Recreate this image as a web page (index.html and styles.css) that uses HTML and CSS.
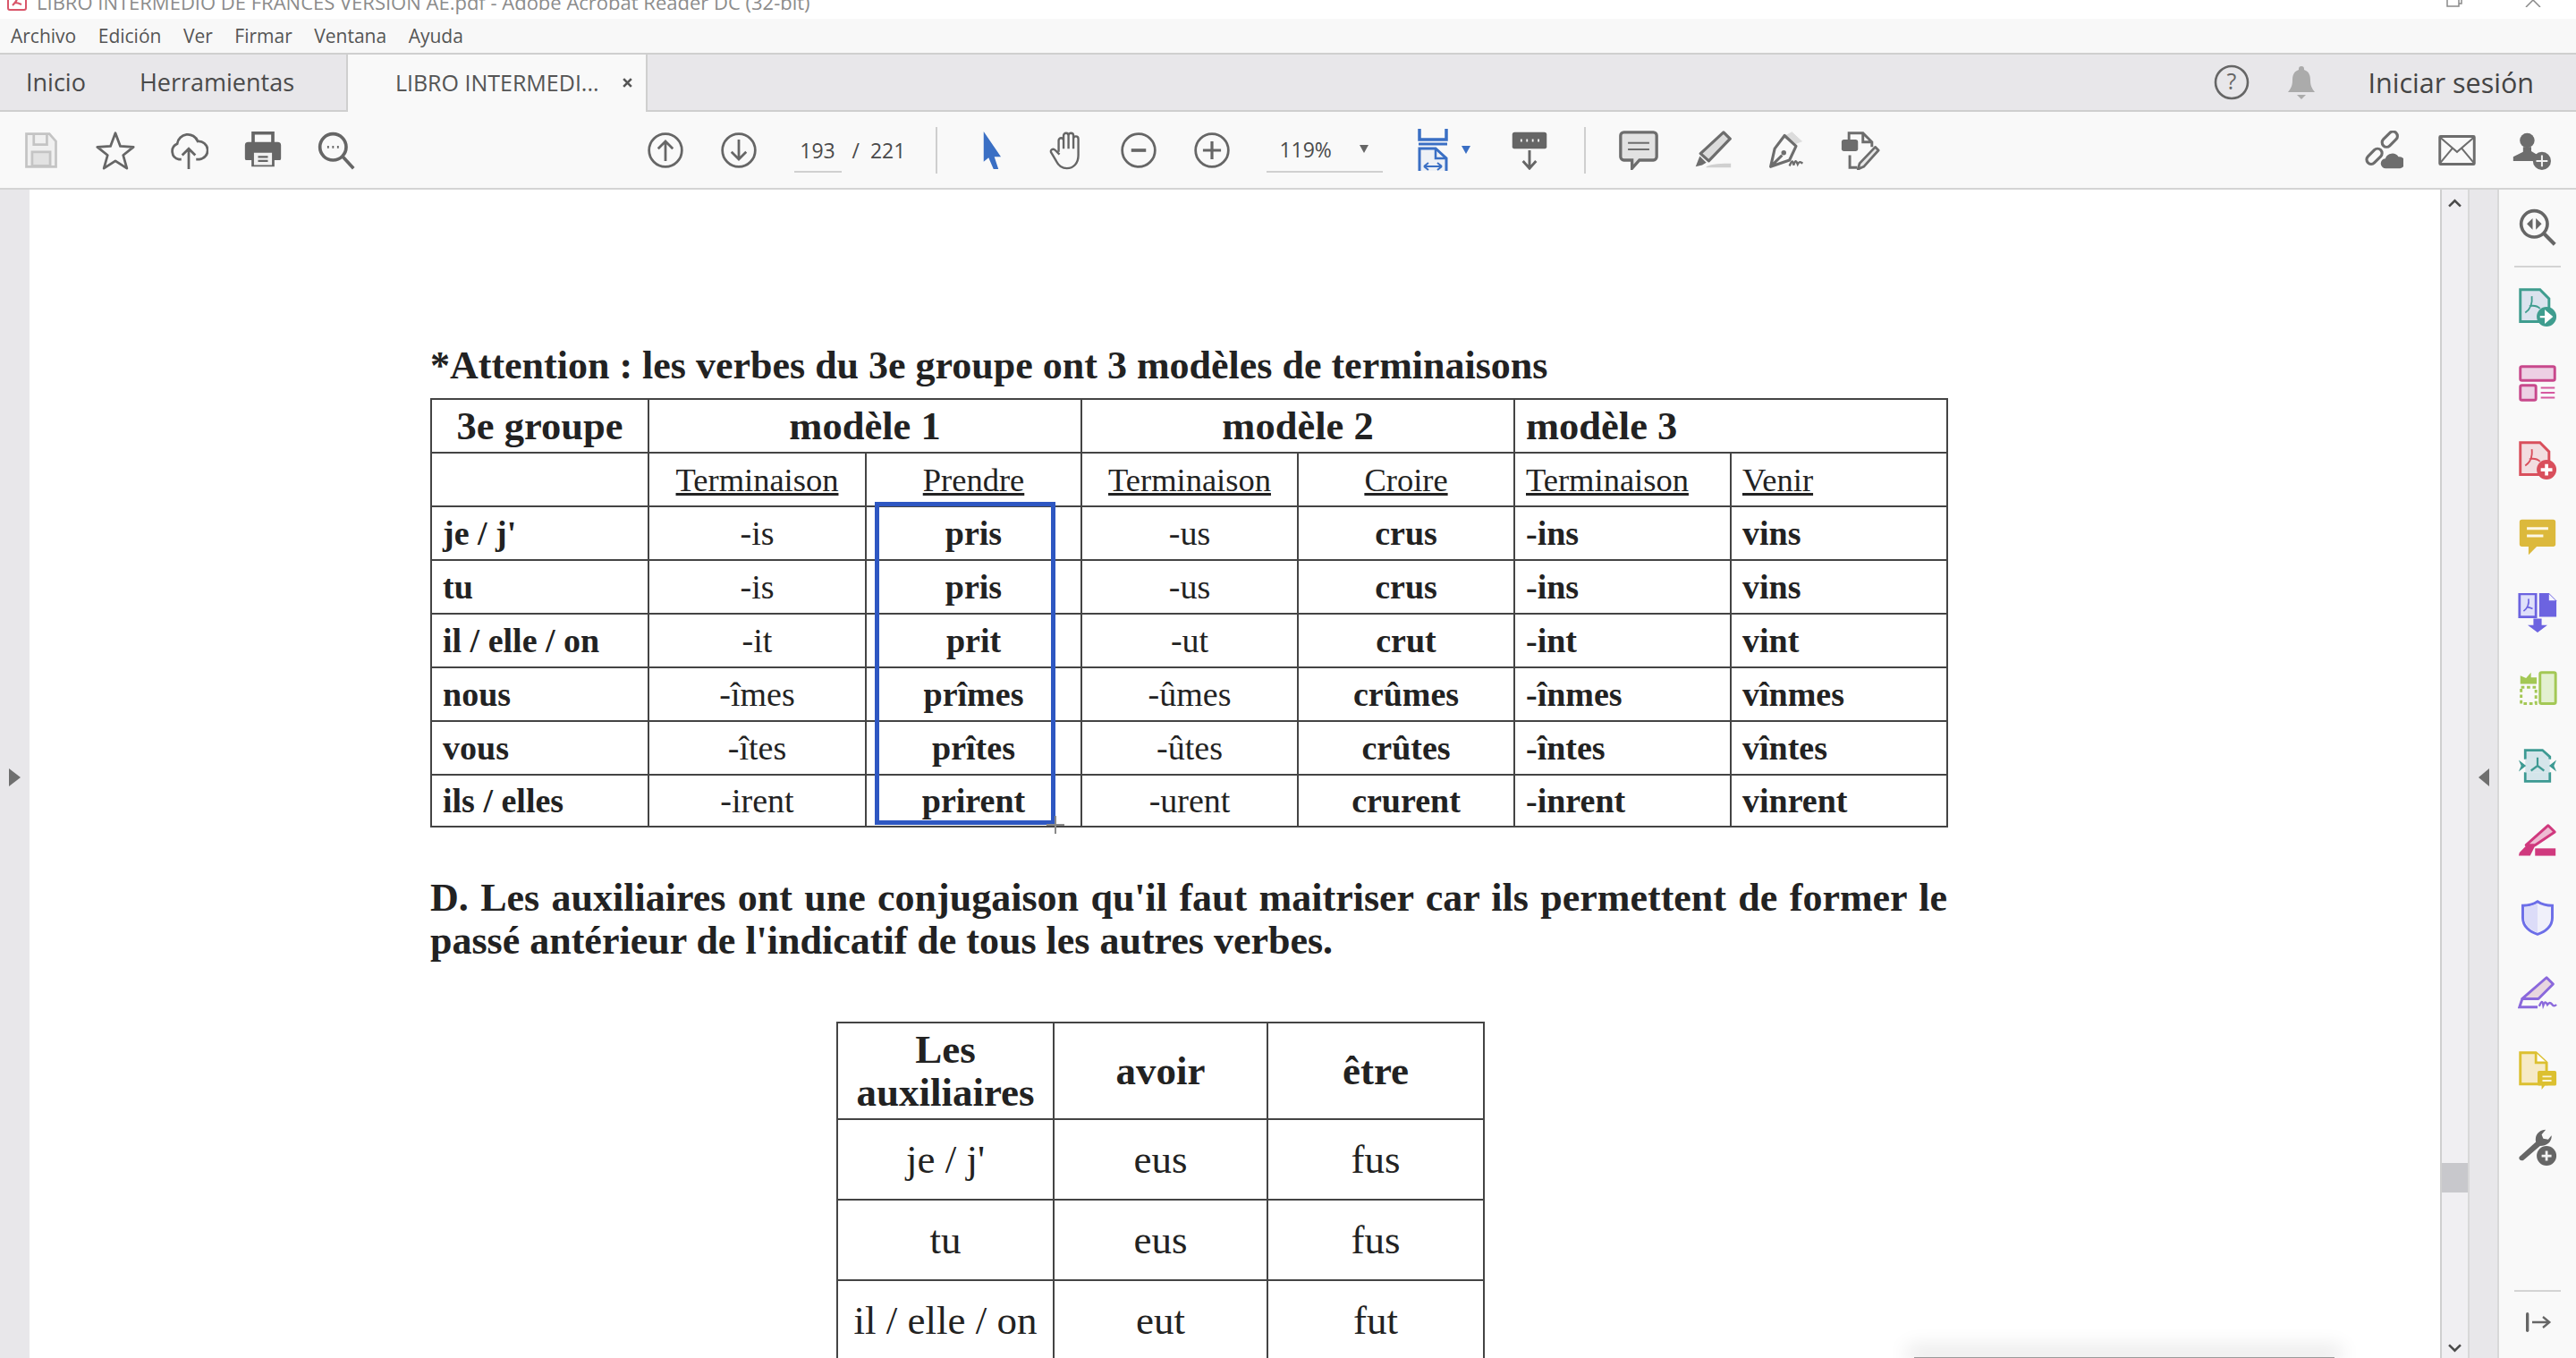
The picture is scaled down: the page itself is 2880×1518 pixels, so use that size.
FILE: index.html
```html
<!DOCTYPE html>
<html lang="es">
<head>
  <meta charset="UTF-8">
  <title>LIBRO INTERMEDIO DE FRANCES VERSION AE.pdf - Adobe Acrobat Reader DC (32-bit)</title>
  <link rel="stylesheet" href="styles.css">
</head>
<body>
  <div id="titlebar">
    <svg class="pdf-mark" viewBox="0 -10 22 22"><rect x="1" y="-10" width="20" height="21" rx="2" fill="#fff" stroke="#d9566a" stroke-width="2"/><path d="M6 6c3-3 6-6 5-10M9 3c3 0 5 1 7 2" fill="none" stroke="#d9566a" stroke-width="2"/></svg>
    <span class="window-title">LIBRO INTERMEDIO DE FRANCES VERSION AE.pdf - Adobe Acrobat Reader DC (32-bit)</span>
    <svg class="win-restore" viewBox="0 0 18 8"><path d="M1 -4v11h13v-11M5 -4h12v8h-3" fill="none" stroke="#8a8a8a" stroke-width="1.5"/></svg>
    <svg class="win-close" viewBox="0 0 18 8"><path d="M1 8L10 -1M17 8L8 -1" fill="none" stroke="#8a8a8a" stroke-width="1.5"/></svg>
  </div>

  <div id="menubar">
    <span>Archivo</span><span>Edición</span><span>Ver</span><span>Firmar</span><span>Ventana</span><span>Ayuda</span>
  </div>

  <div id="tabbar">
    <span class="tab">Inicio</span>
    <span class="tab tab-tools">Herramientas</span>
    <div class="tab-active">
      <span>LIBRO INTERMEDI...</span>
      <svg class="tab-close" viewBox="0 0 12 12"><path d="M2 2l8 8M10 2l-8 8" stroke="#555" stroke-width="2.4" fill="none"/></svg>
    </div>
    <div class="tab-right">
      <svg class="help" viewBox="0 0 40 40"><circle cx="20" cy="20" r="18" fill="none" stroke="#666" stroke-width="2.6"/><text x="20" y="28" text-anchor="middle" class="help-mark">?</text></svg>
      <svg class="bell" viewBox="0 0 32 38"><path d="M16 1a3 3 0 0 1 3 3v1c6 2 7 7 7 12 0 6 2 9 5 13H1c3-4 5-7 5-13 0-5 1-10 7-12V4a3 3 0 0 1 3-3z" fill="#ababab"/><path d="M11 33h10l-5 5z" fill="#ababab"/></svg>
      <span class="signin">Iniciar sesión</span>
    </div>
  </div>

  <div id="toolbar">
    <div class="tool"><svg class="ic" viewBox="0 0 48 48"><path d="M6 4h28l8 9v31H6z" fill="#f0f0f0" stroke="#c4c4c4" stroke-width="3"/><path d="M15 5v12h16V5" fill="none" stroke="#c4c4c4" stroke-width="3"/><rect x="13" y="26" width="22" height="17" fill="#e2e2e2" stroke="#c4c4c4" stroke-width="3"/></svg></div>
    <div class="tool"><svg class="ic" viewBox="0 0 48 48"><path d="M24 3l6 16 16 1-12.500 10 4.500 16-14-9-14 9 4.500-16L2 20l16-1z" fill="none" stroke="#666" stroke-width="3" stroke-linejoin="round"/></svg></div>
    <div class="tool"><svg class="ic" viewBox="0 0 48 48"><path d="M15 35h-3a10 10 0 0 1-2-19 13 13 0 0 1 25-3 11 11 0 0 1 2 22h-4" fill="none" stroke="#666" stroke-width="3"/><path d="M24 47V22M16 30l8-8 8 8" fill="none" stroke="#666" stroke-width="3"/></svg></div>
    <div class="tool"><svg class="ic" viewBox="0 0 48 48"><path d="M12 15V3h24v12" fill="none" stroke="#666" stroke-width="4"/><path d="M6 14h36a4 4 0 0 1 4 4v16a2 2 0 0 1-2 2h-6v8H10v-8H4a2 2 0 0 1-2-2V18a4 4 0 0 1 4-4z" fill="#666"/><rect x="13" y="27" width="22" height="15" fill="#f2f2f2"/><path d="M18 32h12M18 37h12" stroke="#666" stroke-width="2.500"/></svg></div>
    <div class="tool"><svg class="ic" viewBox="0 0 48 48"><circle cx="20" cy="20" r="16" fill="none" stroke="#666" stroke-width="4"/><path d="M32 32l13 14" stroke="#666" stroke-width="4" fill="none"/><path d="M13 20h2M19 20h2M25 20h2" stroke="#666" stroke-width="3" fill="none"/></svg></div>

    <div class="tool nav-start"><svg class="ic" viewBox="0 0 48 48"><circle cx="24" cy="24" r="20" fill="none" stroke="#666" stroke-width="3"/><path d="M24 37V13M15 22l9-9 9 9" fill="none" stroke="#666" stroke-width="3"/></svg></div>
    <div class="tool"><svg class="ic" viewBox="0 0 48 48"><circle cx="24" cy="24" r="20" fill="none" stroke="#666" stroke-width="3"/><path d="M24 11v24M15 26l9 9 9-9" fill="none" stroke="#666" stroke-width="3"/></svg></div>
    <div class="page-field">193</div>
    <span class="page-slash">/</span>
    <span class="page-total">221</span>
    <div class="tool-sep sep-a"></div>

    <div class="tool tool-arrow"><svg class="ic" viewBox="0 0 48 48"><path d="M15 1l21 31-8 0 5 15-6 0-6-14-6 5z" fill="#3a6fc4"/></svg></div>
    <div class="tool"><svg class="ic" viewBox="0 0 48 48"><path transform="translate(4 0)" d="M13 26V12a3 3 0 0 1 6 0v10M19 22V6a3 3 0 0 1 6 0v16M25 22V6a3 3 0 0 1 6 0v16M31 22V10a3 3 0 0 1 6 0v20c0 10-6 16-14 16-6 0-10-3-13-9l-6-10c-2-3 2-6 5-3l5 5" fill="none" stroke="#666" stroke-width="2.600"/></svg></div>
    <div class="tool"><svg class="ic" viewBox="0 0 48 48"><circle cx="24" cy="24" r="20" fill="none" stroke="#666" stroke-width="3"/><path d="M15 24h18" stroke="#666" stroke-width="4"/></svg></div>
    <div class="tool"><svg class="ic" viewBox="0 0 48 48"><circle cx="24" cy="24" r="20" fill="none" stroke="#666" stroke-width="3"/><path d="M13 24h22M24 13v22" stroke="#666" stroke-width="3.500"/></svg></div>
    <div class="zoom-field"><span>119%</span><i class="caret"></i></div>
    <div class="tool tool-fit"><svg class="ic" viewBox="0 0 36 48"><path d="M3 0v12h30V0" fill="none" stroke="#3a6fc4" stroke-width="3.500"/><path d="M2 17h32" stroke="#3a6fc4" stroke-width="3"/><path d="M3 47V22h18l12 11v14" fill="#eef1f6" stroke="#3a6fc4" stroke-width="3"/><path d="M21 22v11h12" fill="none" stroke="#3a6fc4" stroke-width="2.500"/><path d="M8 42h20M8 42l5-4M8 42l5 4M28 42l-5-4M28 42l-5 4" fill="none" stroke="#3a6fc4" stroke-width="2"/></svg><i class="caret caret-blue"></i></div>
    <div class="tool tool-ruler"><svg class="ic" viewBox="0 0 48 48"><path d="M6 2h36a3 3 0 0 1 3 3v15a2 2 0 0 1-2 2H5a2 2 0 0 1-2-2V5a3 3 0 0 1 3-3z" fill="#666"/><path d="M13 12h2M20 12h2M27 12h2M34 12h2" stroke="#f3f3f3" stroke-width="3.500"/><path d="M24 24v22M16 37l8 9 8-9" fill="none" stroke="#666" stroke-width="3.200"/></svg></div>
    <div class="tool-sep sep-b"></div>

    <div class="tool tool-comment"><svg class="ic" viewBox="0 0 48 48"><path d="M6 2h36a4 4 0 0 1 4 4v26a4 4 0 0 1-4 4H25l-9 10v-10H6a4 4 0 0 1-4-4V6a4 4 0 0 1 4-4z" fill="#e2e2e2" stroke="#6d6d6d" stroke-width="3.600"/><path d="M11 15h26M11 23h26" stroke="#6d6d6d" stroke-width="2.200"/></svg></div>
    <div class="tool"><svg class="ic" viewBox="0 0 48 48"><path d="M37 2l8 8-26 27-10-9z" fill="#dcdcdc" stroke="#6d6d6d" stroke-width="3.500" stroke-linejoin="round"/><path d="M8 31l8 8-5 3-8 2z" fill="#6d6d6d"/><path d="M16 44c6-4 20-4 30-4v5H16z" fill="#d0d0d0"/></svg></div>
    <div class="tool"><svg class="ic" viewBox="0 0 48 48"><path d="M31 2l12 11-8 3-15-8z" fill="#dcdcdc" stroke="#dcdcdc"/><path d="M22 6L36 19 28 36 5 44 10 22zM6 43l13-13" fill="none" stroke="#6d6d6d" stroke-width="3.400" stroke-linejoin="round"/><circle cx="21" cy="27" r="3" fill="#6d6d6d"/><path d="M28 43c3-7 4-7 5-1 2-6 3-6 5-1 2-4 3-3 6-1" fill="none" stroke="#6d6d6d" stroke-width="2.600"/></svg></div>
    <div class="tool"><svg class="ic" viewBox="0 0 48 48"><path d="M10 12V3h17l11 11v6M27 3v11h11" fill="none" stroke="#6d6d6d" stroke-width="3.200"/><rect x="1" y="11" width="20" height="14" rx="3" fill="#6d6d6d"/><path d="M11 30v15h9" fill="none" stroke="#6d6d6d" stroke-width="3.200"/><path d="M42 20l4 4-18 20-7 3 2-7z" fill="#e8e8e8" stroke="#6d6d6d" stroke-width="3" stroke-linejoin="round"/></svg></div>

    <div class="tool-right">
      <div class="tool"><svg class="ic" viewBox="0 0 48 48"><g fill="none" stroke="#6d6d6d" stroke-width="3.400"><rect x="-13" y="-5.500" width="22" height="11" rx="5.500" transform="translate(14 30) rotate(-45)"/><rect x="-9" y="-5.500" width="22" height="11" rx="5.500" transform="translate(30 12) rotate(-45)"/></g><path d="M27 46a6 6 0 0 1-1-12 9 9 0 0 1 16-2 7 7 0 0 1 2 14z" fill="#6d6d6d"/></svg></div>
      <div class="tool"><svg class="ic" viewBox="0 0 48 48"><rect x="3" y="7" width="42" height="34" rx="1" fill="none" stroke="#6d6d6d" stroke-width="3.200"/><path d="M3 8l21 18L45 8M3 40l15-18M45 40L30 22" fill="none" stroke="#6d6d6d" stroke-width="2.200"/></svg></div>
      <div class="tool"><svg class="ic" viewBox="0 0 48 48"><circle cx="19" cy="12" r="9" fill="#6d6d6d"/><path d="M14 20h10v5l10 6v6H2v-5l12-6z" fill="#6d6d6d"/><circle cx="37" cy="37" r="11" fill="#6d6d6d"/><path d="M37 30v14M30 37h14" stroke="#f3f3f3" stroke-width="2.200"/></svg></div>
    </div>
  </div>

  <div id="workspace">
    <div class="left-rail"><i class="tri tri-right"></i></div>

    <div class="page">
      <h2 class="page-heading">*Attention : les verbes du 3e groupe ont 3 modèles de terminaisons</h2>

      <div class="table-wrap">
        <table class="conj">
          <colgroup><col class="c1"><col class="c2"><col class="c3"><col class="c4"><col class="c5"><col class="c6"><col class="c7"></colgroup>
          <tr class="head-row">
            <th>3e groupe</th><th colspan="2">modèle 1</th><th colspan="2">modèle 2</th><th colspan="2" class="al">modèle 3</th>
          </tr>
          <tr class="sub-row">
            <td></td><td><u>Terminaison</u></td><td><u>Prendre</u></td><td><u>Terminaison</u></td><td><u>Croire</u></td><td class="al"><u>Terminaison</u></td><td class="al"><u>Venir</u></td>
          </tr>
          <tr><td class="b al">je / j'</td><td>-is</td><td class="b">pris</td><td>-us</td><td class="b">crus</td><td class="b al">-ins</td><td class="b al">vins</td></tr>
          <tr><td class="b al">tu</td><td>-is</td><td class="b">pris</td><td>-us</td><td class="b">crus</td><td class="b al">-ins</td><td class="b al">vins</td></tr>
          <tr><td class="b al">il / elle / on</td><td>-it</td><td class="b">prit</td><td>-ut</td><td class="b">crut</td><td class="b al">-int</td><td class="b al">vint</td></tr>
          <tr><td class="b al">nous</td><td>-îmes</td><td class="b">prîmes</td><td>-ûmes</td><td class="b">crûmes</td><td class="b al">-înmes</td><td class="b al">vînmes</td></tr>
          <tr><td class="b al">vous</td><td>-îtes</td><td class="b">prîtes</td><td>-ûtes</td><td class="b">crûtes</td><td class="b al">-întes</td><td class="b al">vîntes</td></tr>
          <tr class="last-row"><td class="b al">ils / elles</td><td>-irent</td><td class="b">prirent</td><td>-urent</td><td class="b">crurent</td><td class="b al">-inrent</td><td class="b al">vinrent</td></tr>
        </table>
        <div class="selection-box"></div>
        <svg class="crosshair" viewBox="0 0 20 20"><path d="M10 0v20M0 10h20" stroke="#8a8a8a" stroke-width="2"/></svg>
      </div>

      <p class="page-para">D. Les auxiliaires ont une conjugaison qu'il faut maitriser car ils permettent de former le passé antérieur de l'indicatif de tous les autres verbes.</p>

      <table class="aux">
        <colgroup><col class="a1"><col class="a2"><col class="a3"></colgroup>
        <tr class="aux-head"><th>Les auxiliaires</th><th>avoir</th><th>être</th></tr>
        <tr><td>je / j'</td><td>eus</td><td>fus</td></tr>
        <tr><td>tu</td><td>eus</td><td>fus</td></tr>
        <tr><td>il / elle / on</td><td>eut</td><td>fut</td></tr>
      </table>

      <div class="popup-edge"></div>
    </div>

    <div class="scrollbar">
      <svg class="sb-arrow" viewBox="0 0 14 10"><path d="M1 8l6-6 6 6" fill="none" stroke="#4a4a4a" stroke-width="2.400"/></svg>
      <div class="sb-track"><div class="sb-thumb"></div></div>
      <svg class="sb-arrow" viewBox="0 0 14 10"><path d="M1 2l6 6 6-6" fill="none" stroke="#4a4a4a" stroke-width="2.400"/></svg>
    </div>
    <div class="gutter"><i class="tri tri-left"></i></div>

    <div class="sidebar">
      <svg class="side-ic" viewBox="0 0 48 48"><circle cx="20" cy="20" r="16" fill="none" stroke="#666" stroke-width="4"/><path d="M32 32l13 13" stroke="#666" stroke-width="4.500"/><path d="M18 13v14l-7-7zM22 13v14l7-7z" fill="#666"/></svg>
      <div class="side-sep"></div>
      <div class="side-list">
        <svg class="side-ic" viewBox="0 0 48 48"><path d="M3 2h24l11 11v28H3z" fill="#dbe3ee" stroke="#3f9d8f" stroke-width="3.200"/><path d="M9 30c6-4 9-11 8-20M14 22c5-1 10 0 13 3" fill="none" stroke="#3f9d8f" stroke-width="2"/><circle cx="35" cy="35" r="12" fill="#3f9d8f"/><path d="M27 35h10M34 29l7 6-7 6z" stroke="#fff" fill="#fff" stroke-width="2.500"/></svg>
        <svg class="side-ic" viewBox="0 0 48 48"><rect x="3" y="3" width="42" height="17" rx="2" fill="#edd0e4" stroke="#c8488c" stroke-width="3.200"/><rect x="3" y="26" width="19" height="18" rx="2" fill="#edd0e4" stroke="#c8488c" stroke-width="3.200"/><path d="M28 29h17M28 35h17M28 41h17" stroke="#d65aa0" stroke-width="2.200"/></svg>
        <svg class="side-ic" viewBox="0 0 48 48"><path d="M3 2h24l11 11v28H3z" fill="#f2dde0" stroke="#d94f5c" stroke-width="3.200"/><path d="M9 30c6-4 9-11 8-20M14 22c5-1 10 0 13 3" fill="none" stroke="#d94f5c" stroke-width="2"/><circle cx="35" cy="35" r="12" fill="#d94f5c"/><path d="M35 28v14M28 35h14" stroke="#fff" stroke-width="4"/></svg>
        <svg class="side-ic" viewBox="0 0 48 48"><path d="M5 3h38a3 3 0 0 1 3 3v27a3 3 0 0 1-3 3H23l-10 10V36H5a3 3 0 0 1-3-3V6a3 3 0 0 1 3-3z" fill="#dcb93c"/><path d="M11 14h26M11 23h20" stroke="#fdf8e6" stroke-width="3.200"/></svg>
        <svg class="side-ic" viewBox="0 0 48 48"><path d="M2 1h20v28H2z" fill="#dfe0fa" stroke="#6c63e0" stroke-width="3"/><path d="M7 22c4-3 7-8 6-15M11 17c3 0 5 1 7 2" fill="none" stroke="#6c63e0" stroke-width="1.800"/><path d="M26 0h12l9 9v20H26z" fill="#6c63e0"/><path d="M38 1v8h8z" fill="#f4f4ff"/><path d="M19 31h10v8h7L24 48 12 39h7z" fill="#6c63e0"/></svg>
        <svg class="side-ic" viewBox="0 0 48 48"><rect x="27" y="4" width="19" height="38" rx="2" fill="#e3f0d0" stroke="#a3c855" stroke-width="3.200"/><path d="M4 22h18v20H4z" fill="none" stroke="#a3c855" stroke-width="3.200" stroke-dasharray="4 3"/><path d="M3 18V8l7 3 6-7v6h7v8z" fill="#a3c855"/></svg>
        <svg class="side-ic" viewBox="0 0 48 48"><path d="M9 16V5h21l9 8v3M9 32v11h30V32" fill="#d4e5ea" stroke="#3d9a93" stroke-width="3"/><path d="M9 16h30v16H9z" fill="#d4e5ea"/><path d="M1 17l9 7-9 7 3-7zM47 17l-9 7 9 7-3-7z" fill="#3d9a93"/><path d="M24 14v10M24 24l-8 6M24 24l8 6" fill="none" stroke="#3d9a93" stroke-width="2.400"/></svg>
        <svg class="side-ic" viewBox="0 0 48 48"><path d="M37 4l8 8-24 16H10z" fill="#eebcd3" stroke="#d0397e" stroke-width="3.200" stroke-linejoin="round"/><path d="M10 29l-8 8-1 4h14l6-12z" fill="#d0397e"/><rect x="21" y="32" width="25" height="9" fill="#d0397e"/></svg>
        <svg class="side-ic" viewBox="0 0 48 48"><path d="M24 4c6 4 12 5 18 5v15c0 10-8 17-18 20C14 41 6 34 6 24V9c6 0 12-1 18-5z" fill="#f0f0fa" stroke="#6c6ee8" stroke-width="3.200"/><path d="M24 6c-5 4-11 4-16 5v13c0 9 8 15 16 18z" fill="#dcdcf8"/></svg>
        <svg class="side-ic" viewBox="0 0 48 48"><path d="M35 3l8 8-18 18H5z" fill="#e8d5df" stroke="#8a68dc" stroke-width="3.200" stroke-linejoin="round"/><path d="M5 30L2 39h22" fill="none" stroke="#8a68dc" stroke-width="3.200"/><path d="M26 38c3-7 4-7 5-1 2-5 3-5 5-1 2-3 4-3 6 0 1 2 3 2 5 0" fill="none" stroke="#8a68dc" stroke-width="2.600"/></svg>
        <svg class="side-ic" viewBox="0 0 48 48"><path d="M3 2h19l13 12v26H3z" fill="#f6eac6" stroke="#dcc030" stroke-width="3.200"/><path d="M22 2v12h13" fill="#fff" stroke="#dcc030" stroke-width="3"/><path d="M26 24h19a2 2 0 0 1 2 2v14a2 2 0 0 1-2 2H33l-4 5v-5h-3a2 2 0 0 1-2-2V26a2 2 0 0 1 2-2z" fill="#dcc030"/><path d="M30 31h11M30 36h11" stroke="#fbf5d8" stroke-width="2"/></svg>
        <svg class="side-ic" viewBox="0 0 48 48"><path d="M2 36L22 18c-2-8 4-15 12-15l-5 6 2 5 6 1 4-5c1 7-5 13-14 13L7 40c-3 2-7-1-5-4z" fill="#666"/><circle cx="35" cy="35" r="12" fill="#666"/><path d="M35 29v12M29 35h12" stroke="#f3f3f3" stroke-width="3"/></svg>
      </div>
      <div class="side-bottom">
        <div class="side-sep"></div>
        <svg class="side-collapse" viewBox="0 0 48 32"><path d="M4 2v28" stroke="#666" stroke-width="5" stroke-linecap="round"/><path d="M12 16h28M30 7l11 9-11 9" fill="none" stroke="#666" stroke-width="3.400"/></svg>
      </div>
    </div>
  </div>
</body>
</html>
```

FILE: styles.css
```css
* {
  box-sizing: border-box;
}

html, body {
  margin: 0;
  height: 100%;
}

body {
  width: 2880px;
  height: 1518px;
  overflow: hidden;
  display: flex;
  flex-direction: column;
  font-family: "Open Sans", "Noto Sans", sans-serif;
  color: #4a4a4a;
  background: #fff;
}

/* window chrome */
#titlebar {
  height: 21px;
  flex: none;
  display: flex;
  align-items: flex-end;
  padding: 0 39px 6px 8px;
  overflow: hidden;
  background: #fff;
}

.pdf-mark {
  width: 22px;
  height: 22px;
  margin-top: -10px;
  flex: none;
  align-self: flex-start;
}

.window-title {
  margin-left: 11px;
  font-size: 22px;
  line-height: 26px;
  color: #8c8c8c;
  white-space: nowrap;
}

.win-restore {
  width: 18px;
  height: 8px;
  margin-left: auto;
  align-self: flex-start;
}

.win-close {
  width: 18px;
  height: 8px;
  margin-left: 70px;
  align-self: flex-start;
}

#menubar {
  height: 38px;
  flex: none;
  display: flex;
  align-items: center;
  gap: 24.500px;
  padding: 0 0 0 12px;
  background: #f8f8f8;
  font-size: 21px;
  color: #555;
}

#tabbar {
  height: 66px;
  flex: none;
  display: flex;
  align-items: stretch;
  background: #e8e7ea;
  border-top: 2px solid #cfcfcf;
  border-bottom: 2px solid #cfcfcf;
  font-size: 27px;
}

.tab {
  display: flex;
  align-items: center;
  padding: 0 0 2px 29px;
}

.tab-tools {
  padding-left: 60px;
  width: 291px;
}

.tab-active {
  width: 337px;
  margin-bottom: -2px;
  display: flex;
  align-items: center;
  padding: 0 0 2px 53px;
  background: #f9f9f9;
  border-left: 2px solid #cfcfcf;
  border-right: 2px solid #cfcfcf;
  font-size: 25px;
  color: #555;
}

.tab-close {
  width: 13px;
  height: 13px;
  margin-left: 25px;
}

.tab-right {
  margin-left: auto;
  padding-right: 47px;
  display: flex;
  align-items: center;
}

.help {
  width: 40px;
  height: 40px;
}

.help-mark {
  font-family: "Open Sans", sans-serif;
  font-size: 25px;
  fill: #666;
}

.bell {
  width: 32px;
  height: 38px;
  margin-left: 42px;
}

.signin {
  margin-left: 58px;
  font-size: 30.500px;
  font-weight: 500;
  color: #444;
}

#toolbar {
  height: 87px;
  flex: none;
  display: flex;
  align-items: center;
  padding: 0 0 0 5px;
  background: #f9f9f9;
  border-bottom: 2px solid #d4d4d4;
}

.tool {
  width: 82.5px;
  flex: none;
  display: flex;
  align-items: center;
  justify-content: center;
}

.ic {
  width: 44px;
  height: 44px;
}

.nav-start {
  margin-left: 285px;
}

.page-field {
  width: 53px;
  margin-left: 20px;
  height: 50px;
  line-height: 50px;
  text-align: center;
  font-size: 23px;
  border-bottom: 2px solid #d0d0d0;
}

.page-slash {
  margin-left: 12px;
  font-size: 23px;
}

.page-total {
  margin-left: 12px;
  font-size: 23px;
}

.tool-sep {
  width: 2px;
  height: 52px;
  flex: none;
  background: #cfcfcf;
}

.sep-a {
  margin-left: 34px;
}

.tool-arrow {
  margin-left: 18px;
}

.zoom-field {
  width: 130px;
  height: 50px;
  margin-left: 20px;
  flex: none;
  display: flex;
  align-items: center;
  padding-left: 14px;
  border-bottom: 2px solid #d0d0d0;
  font-size: 23px;
}

.caret {
  display: block;
  margin-left: 31px;
  border-top: 9px solid #666;
  border-left: 5px solid transparent;
  border-right: 5px solid transparent;
}

.tool-fit {
  width: 122px;
  padding-left: 38px;
  justify-content: flex-start;
  gap: 14px;
}

.tool-fit .ic {
  width: 36px;
  height: 48px;
}

.caret-blue {
  margin-left: 0;
  border-top-color: #3a6fc4;
}

.sep-b {
  margin-left: 20px;
}

.tool-comment {
  margin-left: 18px;
}

.tool-right {
  margin-left: auto;
  padding-right: 9px;
  display: flex;
}

/* document area */
#workspace {
  flex: 1;
  min-height: 0;
  display: flex;
}

.left-rail {
  width: 33px;
  flex: none;
  display: flex;
  align-items: center;
  padding: 0 0 0 10px;
  background: #e8e7ea;
}

.tri {
  display: block;
  border-top: 10px solid transparent;
  border-bottom: 10px solid transparent;
  margin-top: 8px;
}

.tri-right {
  border-left: 13px solid #6f6f6f;
}

.tri-left {
  border-right: 12px solid #6f6f6f;
}

.page {
  flex: 1;
  min-width: 0;
  position: relative;
  overflow: hidden;
  padding: 172px 0 0 448px;
  background: #fff;
  font-family: "Liberation Serif", serif;
  color: #222;
}

.page-heading {
  margin: 0 0 11px;
  height: 50px;
  font-size: 44px;
  line-height: 50px;
  font-weight: bold;
  white-space: nowrap;
}

.table-wrap {
  position: relative;
  width: 1695px;
}

.conj {
  width: 1695px;
  table-layout: fixed;
  border-collapse: collapse;
  font-size: 38px;
}

.c1 { width: 243px; }
.c2 { width: 243px; }
.c3 { width: 241px; }
.c4 { width: 242px; }
.c5 { width: 242px; }
.c6 { width: 242px; }
.c7 { width: 242px; }

.conj td, .conj th {
  height: 60px;
  padding: 0;
  border: 2px solid #444;
  text-align: center;
}

.conj .last-row td {
  height: 58px;
}

.conj .al {
  padding-left: 12px;
  text-align: left;
}

.head-row th {
  font-size: 44.500px;
}

.sub-row td {
  font-size: 36.500px;
}

.b {
  font-weight: bold;
}

.selection-box {
  position: absolute;
  left: 497px;
  top: 116px;
  width: 202px;
  height: 361px;
  border: 5px solid #2e57c2;
}

.crosshair {
  position: absolute;
  left: 689px;
  top: 467px;
  width: 20px;
  height: 20px;
}

.page-para {
  width: 1696px;
  margin: 55px 0 0;
  font-size: 44px;
  line-height: 48px;
  font-weight: bold;
  text-align: justify;
}

.aux {
  width: 723px;
  margin: 66px 0 0 454px;
  table-layout: fixed;
  border-collapse: collapse;
  font-size: 45px;
}

.a1 { width: 242px; }
.a2 { width: 239px; }
.a3 { width: 242px; }

.aux td, .aux th {
  height: 90px;
  padding: 0;
  border: 2px solid #444;
  text-align: center;
  line-height: 48px;
}

.aux-head th {
  height: 108px;
}

.popup-edge {
  position: absolute;
  left: 2107px;
  bottom: 0;
  width: 470px;
  height: 1px;
  background: #9a9a9a;
  box-shadow: 0 -4px 22px 8px rgba(0, 0, 0, 0.1);
}

.scrollbar {
  width: 33px;
  flex: none;
  display: flex;
  flex-direction: column;
  align-items: center;
  padding: 10px 0 6px;
  background: #f0eff2;
  border-left: 2px solid #cfcfcf;
  border-right: 2px solid #d8d8d8;
}

.sb-arrow {
  width: 15px;
  height: 11px;
  flex: none;
}

.sb-track {
  flex: 1;
  width: 100%;
  padding-top: 1067px;
}

.sb-thumb {
  height: 33px;
  background: #c8c8cc;
}

.gutter {
  width: 33px;
  flex: none;
  display: flex;
  align-items: center;
  padding-left: 10px;
  background: #e8e7ea;
  border-right: 2px solid #d8d8d8;
}

.sidebar {
  width: 86px;
  flex: none;
  display: flex;
  flex-direction: column;
  align-items: center;
  padding-top: 20px;
  background: #f9f9f9;
}

.side-ic {
  width: 44px;
  height: 44px;
  flex: none;
}

.side-sep {
  width: 52px;
  height: 2px;
  margin: 21px 0 23px;
  background: #d4d4d4;
}

.side-list {
  display: flex;
  flex-direction: column;
  align-items: center;
  gap: 41.300px;
}

.side-bottom {
  margin-top: auto;
  padding-bottom: 29px;
  display: flex;
  flex-direction: column;
  align-items: center;
}

.side-collapse {
  width: 32px;
  height: 22px;
  margin-left: 4px;
}
```
